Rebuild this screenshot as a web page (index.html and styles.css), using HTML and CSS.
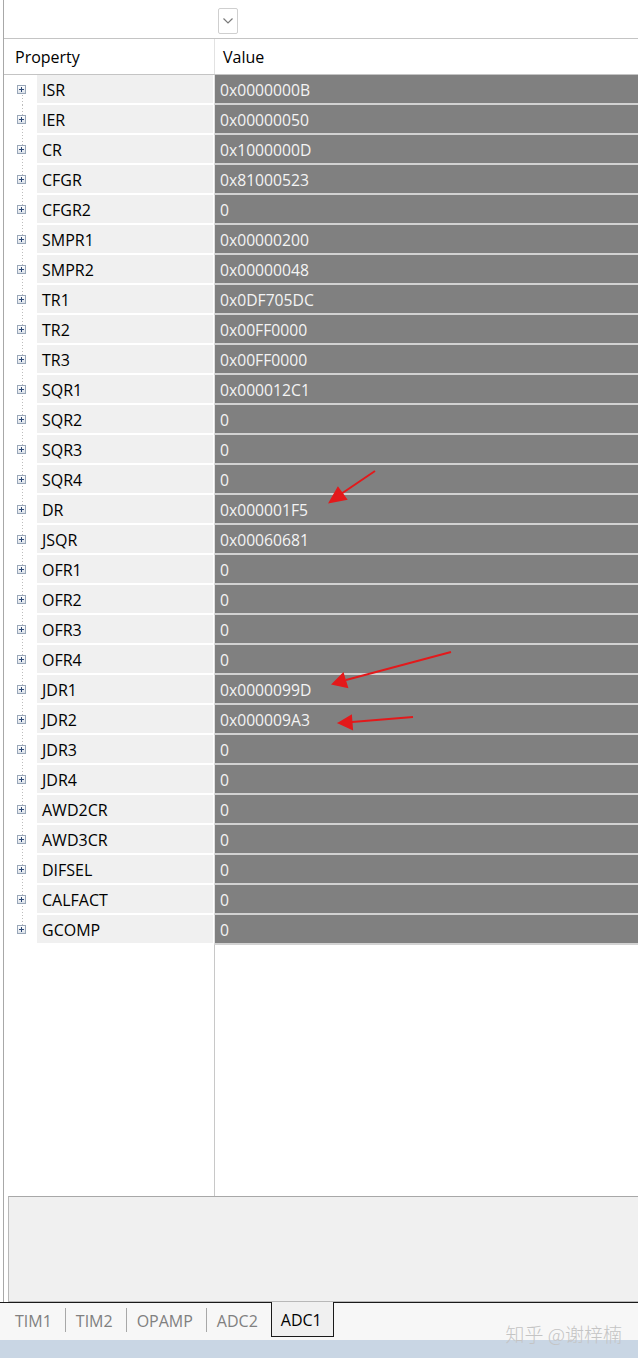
FILE: index.html
```html
<!DOCTYPE html>
<html>
<head>
<meta charset="utf-8">
<link rel="stylesheet" href="styles.css">
</head>
<body>
<div class="page">
  <div class="toolbar">
    <div class="dropdown">
      <svg width="12" height="8" viewBox="0 0 12 8"><path d="M1.5 1.5 L6 6 L10.5 1.5" fill="none" stroke="#7a7a7a" stroke-width="1.2"/></svg>
    </div>
  </div>
  <div class="table">
    <div class="hrow">
      <div class="hprop">Property</div>
      <div class="hval">Value</div>
    </div>
    <div class="rows">
      <div class="row first"><div class="prop"><div class="tree"><span class="exp"></span></div><div class="name">ISR</div></div><div class="val">0x0000000B</div></div>
      <div class="row"><div class="prop"><div class="tree"><span class="exp"></span></div><div class="name">IER</div></div><div class="val">0x00000050</div></div>
      <div class="row"><div class="prop"><div class="tree"><span class="exp"></span></div><div class="name">CR</div></div><div class="val">0x1000000D</div></div>
      <div class="row"><div class="prop"><div class="tree"><span class="exp"></span></div><div class="name">CFGR</div></div><div class="val">0x81000523</div></div>
      <div class="row"><div class="prop"><div class="tree"><span class="exp"></span></div><div class="name">CFGR2</div></div><div class="val">0</div></div>
      <div class="row"><div class="prop"><div class="tree"><span class="exp"></span></div><div class="name">SMPR1</div></div><div class="val">0x00000200</div></div>
      <div class="row"><div class="prop"><div class="tree"><span class="exp"></span></div><div class="name">SMPR2</div></div><div class="val">0x00000048</div></div>
      <div class="row"><div class="prop"><div class="tree"><span class="exp"></span></div><div class="name">TR1</div></div><div class="val">0x0DF705DC</div></div>
      <div class="row"><div class="prop"><div class="tree"><span class="exp"></span></div><div class="name">TR2</div></div><div class="val">0x00FF0000</div></div>
      <div class="row"><div class="prop"><div class="tree"><span class="exp"></span></div><div class="name">TR3</div></div><div class="val">0x00FF0000</div></div>
      <div class="row"><div class="prop"><div class="tree"><span class="exp"></span></div><div class="name">SQR1</div></div><div class="val">0x000012C1</div></div>
      <div class="row"><div class="prop"><div class="tree"><span class="exp"></span></div><div class="name">SQR2</div></div><div class="val">0</div></div>
      <div class="row"><div class="prop"><div class="tree"><span class="exp"></span></div><div class="name">SQR3</div></div><div class="val">0</div></div>
      <div class="row"><div class="prop"><div class="tree"><span class="exp"></span></div><div class="name">SQR4</div></div><div class="val">0</div></div>
      <div class="row"><div class="prop"><div class="tree"><span class="exp"></span></div><div class="name">DR</div></div><div class="val">0x000001F5</div></div>
      <div class="row"><div class="prop"><div class="tree"><span class="exp"></span></div><div class="name">JSQR</div></div><div class="val">0x00060681</div></div>
      <div class="row"><div class="prop"><div class="tree"><span class="exp"></span></div><div class="name">OFR1</div></div><div class="val">0</div></div>
      <div class="row"><div class="prop"><div class="tree"><span class="exp"></span></div><div class="name">OFR2</div></div><div class="val">0</div></div>
      <div class="row"><div class="prop"><div class="tree"><span class="exp"></span></div><div class="name">OFR3</div></div><div class="val">0</div></div>
      <div class="row"><div class="prop"><div class="tree"><span class="exp"></span></div><div class="name">OFR4</div></div><div class="val">0</div></div>
      <div class="row"><div class="prop"><div class="tree"><span class="exp"></span></div><div class="name">JDR1</div></div><div class="val">0x0000099D</div></div>
      <div class="row"><div class="prop"><div class="tree"><span class="exp"></span></div><div class="name">JDR2</div></div><div class="val">0x000009A3</div></div>
      <div class="row"><div class="prop"><div class="tree"><span class="exp"></span></div><div class="name">JDR3</div></div><div class="val">0</div></div>
      <div class="row"><div class="prop"><div class="tree"><span class="exp"></span></div><div class="name">JDR4</div></div><div class="val">0</div></div>
      <div class="row"><div class="prop"><div class="tree"><span class="exp"></span></div><div class="name">AWD2CR</div></div><div class="val">0</div></div>
      <div class="row"><div class="prop"><div class="tree"><span class="exp"></span></div><div class="name">AWD3CR</div></div><div class="val">0</div></div>
      <div class="row"><div class="prop"><div class="tree"><span class="exp"></span></div><div class="name">DIFSEL</div></div><div class="val">0</div></div>
      <div class="row"><div class="prop"><div class="tree"><span class="exp"></span></div><div class="name">CALFACT</div></div><div class="val">0</div></div>
      <div class="row last"><div class="prop"><div class="tree"><span class="exp"></span></div><div class="name">GCOMP</div></div><div class="val">0</div></div>
    </div>
    <div class="filler">
      <div class="fprop"></div>
      <div class="fval"></div>
    </div>
  </div>
  <div class="panel"></div>
</div>
<div class="tabs">
  <span class="tab tab-first">TIM1</span>
  <span class="sep"></span>
  <span class="tab">TIM2</span>
  <span class="sep"></span>
  <span class="tab">OPAMP</span>
  <span class="sep"></span>
  <span class="tab">ADC2</span>
  <span class="tab active">ADC1</span>
  <span class="watermark">知乎 @谢梓楠</span>
</div>
<div class="band"></div>

<svg class="arrows" width="638" height="1359" viewBox="0 0 638 1359">
  <g stroke="#e3191b" stroke-width="2" fill="#e3191b">
    <line x1="375" y1="471" x2="341" y2="494"/>
    <polygon points="330,502 338,488 346,499"/>
    <line x1="451" y1="652" x2="346" y2="680"/>
    <polygon points="333,684 343,674 347,687"/>
    <line x1="413" y1="717" x2="352" y2="722"/>
    <polygon points="339,723 351,716 352,729"/>
  </g>
</svg>
</body>
</html>
```
FILE: styles.css
```css
html, body {
  margin: 0;
  padding: 0;
  background: #ffffff;
}
body {
  width: 638px;
  height: 1359px;
  overflow: hidden;
  position: relative;
  font-family: "Open Sans", "Noto Sans", sans-serif;
  font-size: 16px;
  color: #000;
}
.page {
  margin-left: 3px;
  border-left: 1px solid #a8a8a8;
}
.toolbar {
  height: 38px;
  border-bottom: 1px solid #c4c4c4;
  display: flex;
  align-items: flex-start;
}
.dropdown {
  margin-left: 214px;
  margin-top: 8px;
  width: 18px;
  height: 24px;
  border: 1px solid #cfcfcf;
  border-radius: 2px;
  display: flex;
  align-items: center;
  justify-content: center;
}
.table {
  display: flex;
  flex-direction: column;
}
.hrow {
  height: 35px;
  border-bottom: 1px solid #c4c4c4;
  display: flex;
}
.hprop {
  width: 199px;
  padding-left: 11px;
  line-height: 37px;
}
.hval {
  flex: 1;
  border-left: 1px solid #e2e2e2;
  padding-left: 8px;
  line-height: 37px;
}
.row {
  height: 30px;
  display: flex;
}
.prop {
  width: 210px;
  display: flex;
}
.tree {
  width: 33px;
  height: 30px;
  position: relative;
  background-image: repeating-linear-gradient(to bottom, #bdbdbd 0 1px, transparent 1px 3px);
  background-size: 1px 30px;
  background-repeat: no-repeat;
  background-position: 18px 0;
}
.row.first .tree {
  background-size: 1px 16px;
  background-position: 18px 14px;
}
.row.last .tree {
  background-size: 1px 14px;
  background-position: 18px 0;
}
.exp {
  position: absolute;
  left: 13px;
  top: 10px;
  width: 9px;
  height: 9px;
  box-sizing: border-box;
  border: 1px solid #98a6b8;
  background: linear-gradient(#ffffff, #dde3ea);
}
.exp::before {
  content: "";
  position: absolute;
  left: 1px;
  top: 3px;
  width: 5px;
  height: 1px;
  background: #2e4a78;
}
.exp::after {
  content: "";
  position: absolute;
  left: 3px;
  top: 1px;
  width: 1px;
  height: 5px;
  background: #2e4a78;
}
.name {
  width: 171px;
  height: 28px;
  margin-right: 1px;
  padding-left: 5px;
  background: #f0f0f0;
  border-bottom: 2px solid #ffffff;
  line-height: 30px;
  white-space: nowrap;
  overflow: hidden;
}
.val {
  flex: 1;
  height: 28px;
  border-left: 1px solid #e0e0e0;
  background: #808080;
  border-bottom: 2px solid #d2d2d2;
  color: #f4f4f4;
  padding-left: 5px;
  line-height: 30px;
  font-size: 15.7px;
  overflow: hidden;
}
.filler {
  height: 251px;
  display: flex;
}
.fprop {
  width: 210px;
}
.fval {
  flex: 1;
  border-left: 1px solid #c8c8c8;
}
.panel {
  margin-left: 4px;
  height: 104px;
  background: #f0f0f0;
  border-top: 1px solid #a8a8a8;
  border-left: 1px solid #b8b8b8;
  border-bottom: 1px solid #b8b8b8;
}
.tabs {
  height: 37px;
  border-top: 1px solid #1a1a1a;
  background: #f7f7f7;
  display: flex;
  align-items: center;
  position: relative;
}
.tab {
  color: #808080;
  padding: 0 13px 0 10px;
  line-height: 34px;
  margin-top: -2px;
}
.tab-first {
  padding-left: 15px;
  padding-right: 13px;
}
.sep {
  width: 1px;
  height: 24px;
  background: #a8a8a8;
  margin-top: -3px;
}
.tab.active {
  color: #000;
  margin-left: 0;
  align-self: flex-start;
  margin-top: -1px;
  height: 34px;
  line-height: 36px;
  padding: 0 11px 0 9px;
  background: #f0f0f0;
  border-left: 1px solid #1a1a1a;
  border-right: 1px solid #1a1a1a;
  border-bottom: 1px solid #1a1a1a;
}
.watermark {
  margin-left: auto;
  margin-right: 16px;
  align-self: flex-end;
  margin-bottom: -4px;
  font-family: "Noto Sans CJK SC", sans-serif;
  font-size: 19px;
  font-weight: 300;
  color: #c4c4c4;
  line-height: 20px;
  position: relative;
  z-index: 1;
}
.band {
  height: 18px;
  background: #c9d6e4;
}
.arrows {
  position: absolute;
  left: 0;
  top: 0;
  pointer-events: none;
}
```
